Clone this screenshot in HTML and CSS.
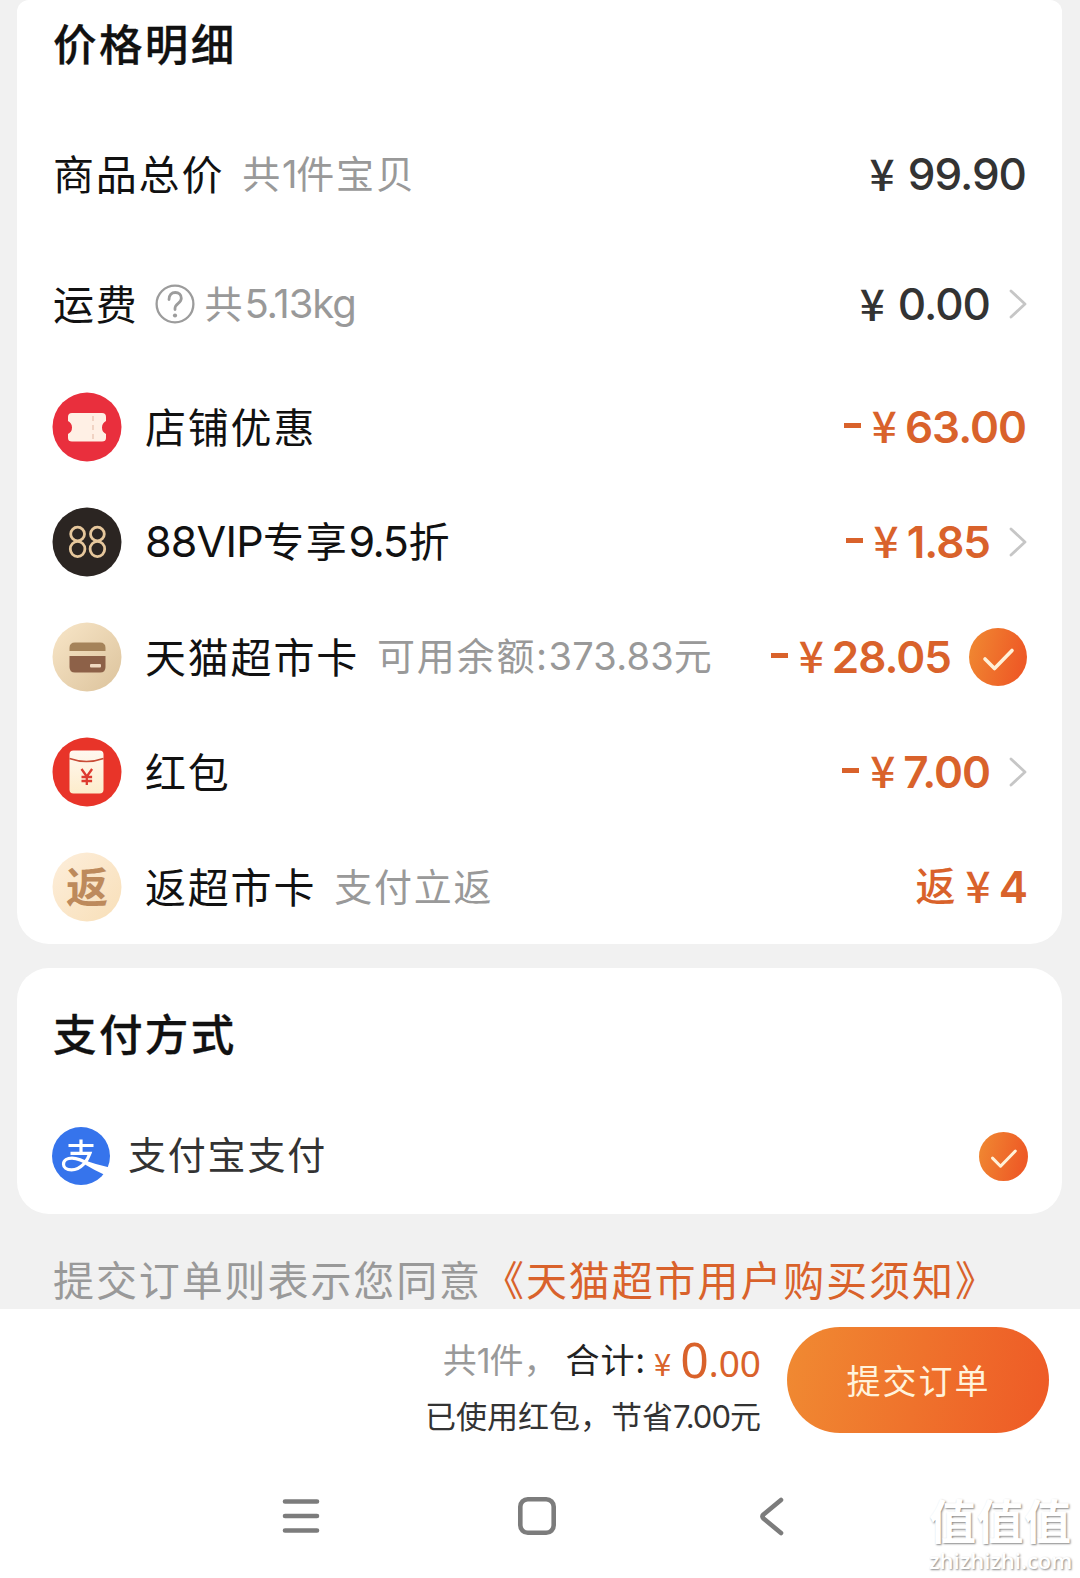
FILE: index.html
```html
<!DOCTYPE html>
<html lang="zh-CN">
<head>
<meta charset="utf-8">
<title>确认订单</title>
<link rel="stylesheet" href="styles.css">
</head>
<body>
<svg width="0" height="0" class="defs" aria-hidden="true">
  <defs>
    <linearGradient id="orange" x1="0" y1="0" x2="1" y2="0.25"><stop offset="0" stop-color="#f08a32"/><stop offset="1" stop-color="#ee5a26"/></linearGradient>
    <linearGradient id="sand" x1="0" y1="0" x2="1" y2="1"><stop offset="0" stop-color="#f8e6c8"/><stop offset="1" stop-color="#dcc39c"/></linearGradient>
    <linearGradient id="cream" x1="0" y1="0" x2="1" y2="1"><stop offset="0" stop-color="#fdeedb"/><stop offset="1" stop-color="#f8dfb8"/></linearGradient>
    <linearGradient id="paper" x1="0" y1="0" x2="0" y2="1"><stop offset="0" stop-color="#fff8f0"/><stop offset="1" stop-color="#fdeccb"/></linearGradient>
    <symbol id="chevron" viewBox="0 0 18 30"><path d="M2 2 16 15 2 28" fill="none" stroke="#c6c6c6" stroke-width="2.8" stroke-linecap="round" stroke-linejoin="round"/></symbol>
    <symbol id="check" viewBox="0 0 58 58"><circle cx="29" cy="29" r="29" fill="url(#orange)"/><path d="M16 31 25.500 40.500 43 22.500" fill="none" stroke="#fff1d8" stroke-width="3.600" stroke-linecap="round" stroke-linejoin="round"/></symbol>
  </defs>
</svg>
<main class="page">
  <section class="card prices">
    <h2 class="title">价格明细</h2>
    <div class="row tall">
      <span class="label">商品总价</span><span class="note note-count">共<span class="one">1</span>件宝贝</span>
      <span class="amount dark wide last"><span class="yen">¥</span>99.90</span>
    </div>
    <div class="row tall">
      <span class="label">运费</span>
      <svg class="help" viewBox="0 0 40 40"><circle cx="20" cy="20" r="18.400" fill="none" stroke="#9c9c9c" stroke-width="2.300"/><path d="M14 15.500c0-4.500 2.700-7 6.300-7s6 2.400 6 5.700c0 5.200-6.300 5-6.300 10.300v1" fill="none" stroke="#9c9c9c" stroke-width="2.800" stroke-linecap="round"/><circle cx="20" cy="31.500" r="2.100" fill="#9c9c9c"/></svg>
      <span class="note note-weight">共<span class="kg">5.13kg</span></span>
      <span class="amount dark wide"><span class="yen">¥</span>0.00</span>
      <svg class="chevron"><use href="#chevron"/></svg>
    </div>
    <div class="row">
      <svg class="icon" viewBox="0 0 70 70"><circle cx="35" cy="35" r="34.500" fill="#e92f3d"/><path d="M20 21h30q4 0 4 4v4q-4 2-4 6.500t4 6.500v4q0 3.500-4 3.500H20q-4 0-4-3.500v-4q4-2 4-6.500t-4-6.500v-4q0-4 4-4z" fill="#fff0e5"/><path d="M41 24v23" stroke="#edc9b8" stroke-width="1.500" stroke-dasharray="5 4"/></svg>
      <span class="label">店铺优惠</span>
      <span class="amount last"><span class="minus"></span><span class="yen">¥</span>63.00</span>
    </div>
    <div class="row">
      <svg class="icon" viewBox="0 0 70 70"><circle cx="35" cy="35" r="34.500" fill="#2b2522"/><g fill="none" stroke="#e6c79c" stroke-width="2.800"><ellipse cx="25.600" cy="27" rx="6.900" ry="6.800"/><ellipse cx="45.400" cy="27" rx="6.900" ry="6.800"/><ellipse cx="25.600" cy="42" rx="7.300" ry="7.600"/><ellipse cx="45.400" cy="42" rx="7.300" ry="7.600"/></g></svg>
      <span class="label"><span class="latin">88VIP</span>专享<span class="latin nine">9.5</span>折</span>
      <span class="amount"><span class="minus"></span><span class="yen">¥</span>1.85</span>
      <svg class="chevron"><use href="#chevron"/></svg>
    </div>
    <div class="row">
      <svg class="icon" viewBox="0 0 70 70"><circle cx="35" cy="35" r="34.500" fill="url(#sand)"/><path d="M17.500 29v-3q0-5.500 5.500-5.500h25q5.500 0 5.500 5.500v3z" fill="#a5835a"/><path d="M17.500 34h36v11q0 5.500-5.500 5.500H23q-5.500 0-5.500-5.500z" fill="#8d6148"/><rect x="38" y="42" width="11" height="3.500" rx="1" fill="#f0d9c0"/></svg>
      <span class="label">天猫超市卡</span><span class="note note-balance">可用余额:<span class="bal">373.83</span>元</span>
      <span class="amount"><span class="minus"></span><span class="yen">¥</span>28.05</span>
      <svg class="check"><use href="#check"/></svg>
    </div>
    <div class="row">
      <svg class="icon" viewBox="0 0 70 70"><circle cx="35" cy="35" r="34.500" fill="#e83429"/><rect x="17.500" y="13.500" width="34" height="43" rx="4" fill="url(#paper)"/><path d="M17.500 21.500q17 6 34 0" fill="none" stroke="#c84b36" stroke-width="1.700"/><path d="m29.500 32 5.300 7.500 5.300-7.500M34.800 39.500V48M29.500 40h10.600M29.500 44h10.600" fill="none" stroke="#dd3a2f" stroke-width="2.300"/></svg>
      <span class="label">红包</span>
      <span class="amount"><span class="minus"></span><span class="yen">¥</span>7.00</span>
      <svg class="chevron"><use href="#chevron"/></svg>
    </div>
    <div class="row">
      <svg class="icon" viewBox="0 0 70 70"><circle cx="35" cy="35" r="34.500" fill="url(#cream)"/><text class="badge-text" x="35" y="51" text-anchor="middle">返</text></svg>
      <span class="label">返超市卡</span><span class="note note-back">支付立返</span>
      <span class="amount back"><span class="fan">返</span><span class="yen">¥</span>4</span>
    </div>
  </section>

  <section class="card payment">
    <h2 class="title">支付方式</h2>
    <div class="row pay">
      <svg class="alipay" viewBox="0 0 58 58"><circle cx="29" cy="29" r="29" fill="#3674ec"/><path d="M16.500 18.500h25M29 12.500v14M18.500 26.300h19.500c-2.500 7.500-9 16.500-18.500 16.500-5 0-8-2.300-8-5.600 0-4 4-6 8.500-6 8 0 14.500 4.500 21 8.300" fill="none" stroke="#fff" stroke-width="3.200"/><path d="M33 33.500Q44 37.500 57.500 40.500L53 48Q42 43 33 37.500z" fill="#fff"/></svg>
      <span class="pay-name">支付宝支付</span>
      <svg class="check small"><use href="#check"/></svg>
    </div>
  </section>

  <p class="terms"><span>提交订单则表示您同意</span><a class="terms-link">《天猫超市用户购买须知》</a></p>

  <footer class="footer">
    <div class="checkout">
      <div class="summary">
        <div class="total"><span class="pieces">共<span class="one">1</span>件，</span><span class="sum">合计:</span><span class="sum-yen">¥</span><span class="big">0</span><span class="cents">.00</span></div>
        <div class="saved">已使用红包，节省<span class="saved-num">7.00</span>元</div>
      </div>
      <button class="submit">提交订单</button>
    </div>
    <nav class="nav">
      <svg viewBox="0 0 42 42"><path d="M5 6.500h32M5 21h32M5 35.500h32" fill="none" stroke="#7c7c7c" stroke-width="4.600" stroke-linecap="round"/></svg>
      <svg viewBox="0 0 42 42"><rect x="4.300" y="4.300" width="33.400" height="33.400" rx="7.500" fill="none" stroke="#7c7c7c" stroke-width="4.600"/></svg>
      <svg viewBox="0 0 42 42"><path d="M29 5 11.500 19.500q-2 2 0 4L29 38" fill="none" stroke="#7c7c7c" stroke-width="4.600" stroke-linecap="round" stroke-linejoin="round"/></svg>
    </nav>
  </footer>
  <div class="watermark"><b>值值值</b><span>zhizhizhi.com</span></div>
</main>
</body>
</html>
```
FILE: styles.css
```css
* { box-sizing: border-box; }
body { margin: 0; background: #f1f1f1; font-family: "Noto Sans CJK SC", sans-serif; color: #111; }
.defs { position: absolute; }
.page { position: relative; width: 1080px; height: 1578px; overflow: hidden; display: flex; flex-direction: column; }
.card { margin: 0 18px 0 17px; padding: 0 35px; background: #fff; flex: none; }
.prices { height: 944px; border-radius: 12px 12px 32px 32px; }
.payment { height: 246px; margin-top: 24px; border-radius: 32px; }
.title { margin: 0; padding-left: 1px; height: 110px; line-height: 86px; font-size: 43.5px; font-weight: 500; letter-spacing: 2.4px; white-space: nowrap; -webkit-text-stroke: .3px #111; }
.payment .title { height: 130px; line-height: 129px; }
.row { display: flex; align-items: center; height: 115px; white-space: nowrap; line-height: 60px; }
.tall { height: 130px; }
.icon { width: 70px; height: 70px; margin: 0 23px 2px 0; flex: none; }
.label { font-size: 41px; letter-spacing: 1.8px; padding-bottom: 6px; }
.tall .label { padding-left: 1px; }
.latin { font-family: Inter, sans-serif; font-size: 43px; letter-spacing: -.8px; }
.nine { letter-spacing: -1.5px; margin-right: 1px; }
.note { font-size: 38px; color: #999; letter-spacing: 1.8px; padding-bottom: 5px; }
.note-count { margin-left: 18px; }
.one { font-family: Inter, sans-serif; letter-spacing: -1.2px; }
.help { width: 40px; height: 40px; margin: 0 10px 2px 16px; }
.kg { font-family: Inter, sans-serif; font-size: 40px; letter-spacing: -1.1px; }
.note-balance { margin-left: 18px; }
.note-back { margin-left: 18px; }
.bal { font-family: Inter, sans-serif; letter-spacing: .2px; }
.amount { margin-left: auto; display: flex; align-items: center; font: 600 44px/60px Inter, sans-serif; letter-spacing: -1px; color: #d9622b; padding-bottom: 2px; }
.dark { color: #333; font-weight: 500; }
.last { padding-right: 1px; }
.yen { font: 500 44px/60px "Noto Sans CJK SC", sans-serif; margin: 0 9px 5px 0; }
.wide .yen { margin-right: 14px; }
.minus { width: 17px; height: 5px; background: #d9622b; margin: 0 11px 3px 0; }
.fan { font: 500 40px/60px "Noto Sans CJK SC", sans-serif; margin: 0 11px 5px 0; }
.chevron { width: 18px; height: 30px; margin: 0 0 2px 19px; flex: none; }
.check { width: 58px; height: 58px; margin: 0 0 2px 18px; flex: none; }
.badge-text { font: 700 42px "Noto Sans CJK SC", sans-serif; fill: #bd8a5c; }
.pay { height: 116px; }
.alipay { width: 58px; height: 58px; margin-right: 18px; }
.pay-name { font-size: 38px; letter-spacing: 1.8px; color: #333; padding-bottom: 6px; }
.small { width: 49px; height: 49px; margin: 0 -1px 0 auto; }
.terms { margin: 0; height: 95px; padding: 34px 0 0 53px; line-height: 60px; font-size: 41px; letter-spacing: 1.9px; color: #999; white-space: nowrap; display: flex; flex: none; }
.terms-link { color: #d9622b; margin-left: 1px; }
.footer { height: 269px; background: #fff; flex: none; }
.checkout { display: flex; justify-content: flex-end; height: 142px; padding: 18px 31px 0 0; }
.summary { display: flex; flex-direction: column; align-items: flex-end; margin-right: 26px; white-space: nowrap; }
.total { display: flex; align-items: flex-start; height: 61px; line-height: 60px; font-size: 34px; }
.pieces { color: #999; margin: 2px 8px 0 0; }
.sum { color: #222; letter-spacing: 1px; margin-top: 2px; }
.sum-yen { color: #d9622b; font-size: 31px; margin: 6px 9px 0 8px; }
.big { color: #d9622b; font: 400 50px/60px "Noto Sans", sans-serif; margin-top: 2px; }
.cents { color: #d9622b; font: 400 37px/60px "Noto Sans", sans-serif; margin-top: 6px; }
.saved { font-size: 31px; line-height: 53px; color: #333; }
.saved-num { font-family: Inter, sans-serif; letter-spacing: -1px; }
.submit { width: 262px; height: 106px; border: 0; padding: 0 0 2px; border-radius: 53px; background: linear-gradient(100deg, #f08a32, #ee5a26); color: #fff3dc; font: 400 34px/105px "Noto Sans CJK SC", sans-serif; letter-spacing: 2px; text-indent: 1px; }
.nav { display: flex; padding: 44px 0 0 280px; gap: 194px; }
.nav svg { width: 42px; height: 42px; flex: none; }
.watermark { position: absolute; left: 929px; top: 1487px; width: 145px; color: #fff; text-shadow: 1px 1px 2px #888; }
.watermark b { display: block; font-size: 47px; line-height: 64px; letter-spacing: .5px; white-space: nowrap; }
.watermark span { display: block; font: 600 22px/24px "Open Sans", sans-serif; margin-top: -3px; }
```
